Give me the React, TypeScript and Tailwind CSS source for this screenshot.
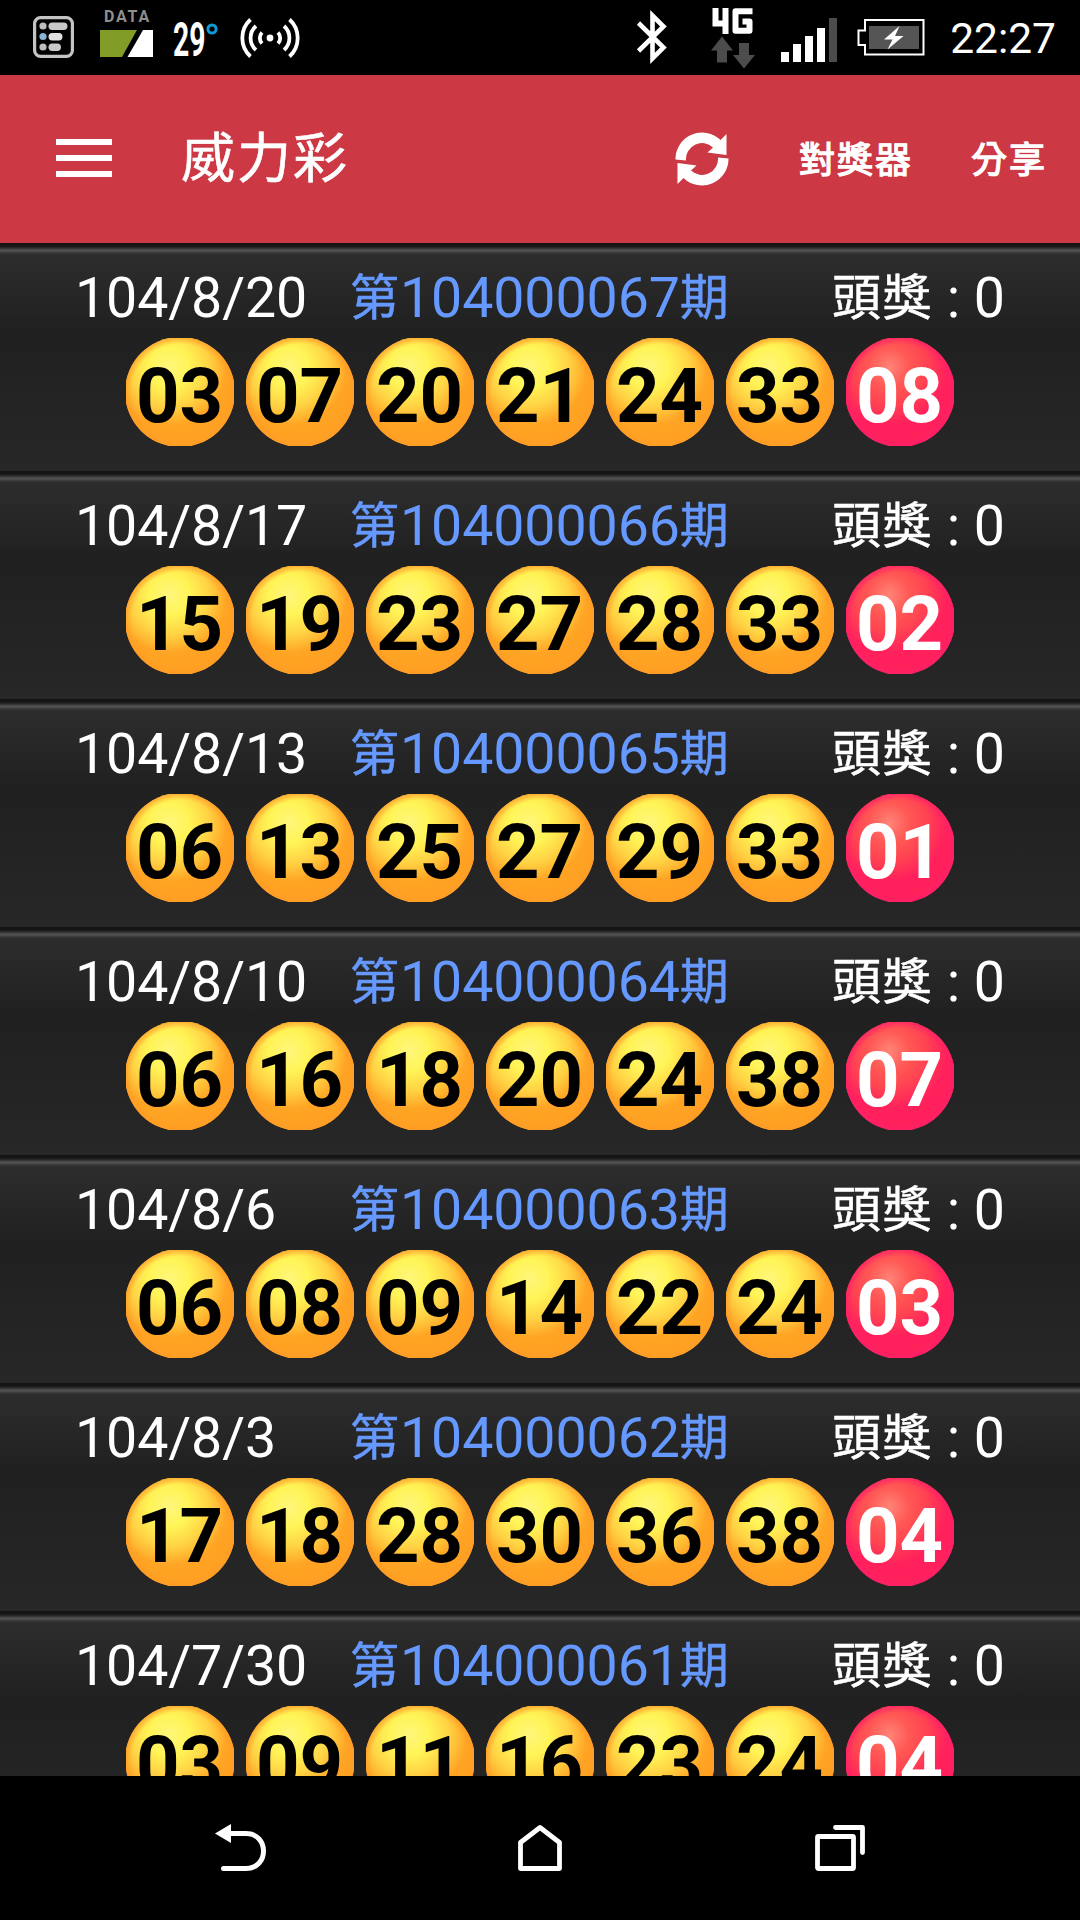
const LATIN = "font-['Roboto','Noto_Sans_CJK_TC',sans-serif]";

type Draw = {
  date: string;
  period: string;
  numbers: string[];
  special: string;
  jackpot: number;
};

const DRAWS: Draw[] = [
  { date: '104/8/20', period: '104000067', numbers: ['03', '07', '20', '21', '24', '33'], special: '08', jackpot: 0 },
  { date: '104/8/17', period: '104000066', numbers: ['15', '19', '23', '27', '28', '33'], special: '02', jackpot: 0 },
  { date: '104/8/13', period: '104000065', numbers: ['06', '13', '25', '27', '29', '33'], special: '01', jackpot: 0 },
  { date: '104/8/10', period: '104000064', numbers: ['06', '16', '18', '20', '24', '38'], special: '07', jackpot: 0 },
  { date: '104/8/6', period: '104000063', numbers: ['06', '08', '09', '14', '22', '24'], special: '03', jackpot: 0 },
  { date: '104/8/3', period: '104000062', numbers: ['17', '18', '28', '30', '36', '38'], special: '04', jackpot: 0 },
  { date: '104/7/30', period: '104000061', numbers: ['03', '09', '11', '16', '23', '24'], special: '04', jackpot: 0 },
];

function ListIcon() {
  return (
    <svg width="41" height="42" viewBox="0 0 41 42" fill="none">
      <rect x="1.6" y="1.6" width="37.8" height="38.8" rx="6" stroke="#c4c4c4" strokeWidth="3.2" />
      <circle cx="10" cy="10" r="3.6" fill="#bdbdbd" />
      <circle cx="10" cy="20.5" r="3.6" fill="#86b4d4" />
      <circle cx="10" cy="31" r="3.6" fill="#bdbdbd" />
      <rect x="15.5" y="6.5" width="19" height="7.4" rx="3.7" fill="#c8c8c8" />
      <rect x="15.5" y="17" width="14" height="7.4" rx="3.7" fill="#e2e2e2" />
      <rect x="15.5" y="27.5" width="12.5" height="7.4" rx="3.7" fill="#c8c8c8" />
    </svg>
  );
}

function HotspotIcon() {
  return (
    <svg width="60" height="40" viewBox="0 0 60 40" fill="none" stroke="#fff" strokeWidth="3.8">
      <circle cx="30" cy="20" r="3.4" fill="#fff" stroke="none" />
      <path d="M22 14.5a8 8 0 0 0 0 11M16 8a16 16 0 0 0 0 24M10.5 1.5a25 25 0 0 0 0 37" />
      <path d="M38 14.5a8 8 0 0 1 0 11M44 8a16 16 0 0 1 0 24M49.5 1.5a25 25 0 0 1 0 37" />
    </svg>
  );
}

function StatusBar() {
  return (
    <header className="flex h-[75px] shrink-0 items-start bg-black text-white">
      <div className="ml-[33px] mt-[16px]">
        <ListIcon />
      </div>
      <div className="ml-[26px] mt-[9px] flex w-[53px] flex-col">
        <span className="pl-1 text-[16px] font-bold leading-[15px] tracking-[1.8px] text-[#8f8f8f]">DATA</span>
        <svg className="mt-[6px]" width="53" height="27" viewBox="0 0 53 27">
          <path d="M0 0H37L22 27H0z" fill="#819c27" />
          <path d="M43 0H53V27H27.5z" fill="#fff" />
        </svg>
      </div>
      <div className="ml-[20px] mt-[17px] flex w-[45px]">
        <span className="w-[33px] origin-left scale-x-[0.59] text-[48px] font-bold leading-[46px]">29</span>
        <svg className="mt-[6px] shrink-0" width="12" height="12" viewBox="0 0 12 12" fill="none">
          <circle cx="6" cy="6" r="4.1" stroke="#0f9ad8" strokeWidth="3" />
        </svg>
      </div>
      <div className="ml-[22px] mt-[18px]">
        <HotspotIcon />
      </div>

      <div className="ml-auto mt-[9px]">
        <svg width="32" height="56" viewBox="0 0 32 56" fill="none" stroke="#fff" strokeWidth="4.6">
          <path d="M2.5 14L27.5 38.5 16.5 49.5V6.5L27.5 17.5 2.5 42" />
        </svg>
      </div>
      <svg className="ml-[42px] mt-[7px]" width="46" height="62" viewBox="0 0 46 62" fill="none">
        <path d="M5.5 1V16.5H15M15.5 1V27" stroke="#fff" strokeWidth="6" />
        <path d="M42.5 4.2H25.5V23.8H39.5V14.5H32.5" stroke="#fff" strokeWidth="6" strokeLinejoin="round" />
        <path d="M12 29.5L23 43.5H17V55.5H7V43.5H1z" fill="#4c4c4c" />
        <path d="M29 36H39V48H45L34 61.5 23 48H29z" fill="#4c4c4c" />
      </svg>
      <div className="ml-[25px] mt-[18px] flex h-[44px] items-end gap-1">
        <i className="h-[10px] w-2 bg-white" />
        <i className="h-[18px] w-2 bg-white" />
        <i className="h-[26px] w-2 bg-white" />
        <i className="h-[34px] w-2 bg-white" />
        <i className="h-[44px] w-2 bg-[#4c4c4c]" />
      </div>
      <svg className="ml-[20px] mt-[19px]" width="68" height="37" viewBox="0 0 68 37" fill="none">
        <path d="M8 1H66.5V35.5H8V26H1.5V11.5H8z" stroke="#fff" strokeWidth="2" />
        <rect x="12" y="7" width="50" height="23" fill="#555" />
        <path d="M42.5 7L27 20.5H35.5L30.5 30.5 46.5 17H38z" fill="#fff" />
      </svg>
      <span className="ml-[25px] mr-[24px] mt-[14px] text-[42.5px] leading-[50px]">22:27</span>
    </header>
  );
}

function SyncIcon() {
  return (
    <svg width="54" height="54" viewBox="0 0 54 54" fill="#fff">
      <path d="M.5 27.5A26.5 26.5 0 0 1 45.5 8L51.5 2V23L32.5 20.5 38 15.5A16 16 0 0 0 11 28.5z" />
      <path d="M53.5 26.5A26.5 26.5 0 0 1 8.5 46L2.5 52V31L21.5 33.5 16 38.5A16 16 0 0 0 43 25.5z" />
    </svg>
  );
}

function Toolbar() {
  return (
    <nav className="flex h-[168px] shrink-0 items-center bg-[#cc3844] pb-[2px] text-white">
      <button className="ml-[56px] flex w-[56px] flex-col gap-[10px]" aria-label="menu">
        <i className="h-[6px] bg-white" />
        <i className="h-[6px] bg-white" />
        <i className="h-[6px] bg-white" />
      </button>
      <h1 className="ml-[69px] pt-[3px] text-[54px] leading-[60px] tracking-[2px] [-webkit-text-stroke:0.6px]">威力彩</h1>
      <button className="ml-auto pt-[2px]" aria-label="refresh">
        <SyncIcon />
      </button>
      <button className="ml-[70px] pt-[6px] text-[36px] leading-[44px] tracking-[2px] [-webkit-text-stroke:1.3px]">
        對獎器
      </button>
      <button className="ml-[58px] mr-[33px] pt-[6px] text-[36px] leading-[44px] tracking-[2px] [-webkit-text-stroke:1.3px]">
        分享
      </button>
    </nav>
  );
}

function Ball({ value, special = false }: { value: string; special?: boolean }) {
  const color = special
    ? 'text-white bg-[radial-gradient(circle,transparent_48px,#ff2068_57px),radial-gradient(circle_at_40%_27%,#ff8478_0%,#ff5854_20%,#ff4452_36%,#ff205c_57%,#ff205c_100%)]'
    : 'text-black bg-[radial-gradient(circle,transparent_48px,#ff9c28_57px),radial-gradient(circle_at_40%_27%,#fff67c_0%,#fff456_20%,#ffd244_39%,#ffa424_57%,#ff9c20_100%)]';
  return (
    <span
      className={`flex size-[108px] items-center justify-center pr-[1px] pt-[7px] text-[76px] font-bold leading-none [clip-path:circle(55px)] ${color}`}
    >
      {value}
    </span>
  );
}

function DrawRow({ draw }: { draw: Draw }) {
  return (
    <li className="flex h-[228px] shrink-0 flex-col bg-[linear-gradient(#141414_0px,#161616_3px,#2e2e2e_5px,#505050_7px,#505050_8px,#363636_10px,#2c2c2c_12px,#2a2a2a_30px,#202020_88px,#232323_150px,#272727_228px)]">
      <div className="flex h-[95px] items-start pt-[23px] text-[55.5px] leading-[66px] tracking-[-0.1px] text-white">
        <span className="ml-[75px] w-[275px]">{draw.date}</span>
        <span className="flex w-[482px] text-[#6699ff]">
          <span className="w-[50px] text-[49px] [-webkit-text-stroke:0.5px]">第</span>
          {draw.period}
          <span className="text-[49px] [-webkit-text-stroke:0.5px]">期</span>
        </span>
        <span className="flex whitespace-pre">
          <span className="text-[49px] tracking-[1.5px] [-webkit-text-stroke:0.5px]">頭獎</span> : {draw.jackpot}
        </span>
      </div>
      <div className="flex justify-center gap-3">
        {draw.numbers.map((n) => (
          <Ball key={n} value={n} />
        ))}
        <Ball value={draw.special} special />
      </div>
    </li>
  );
}

function NavBar() {
  return (
    <footer className="flex h-[144px] shrink-0 items-center justify-between bg-black px-[215px]">
      <svg width="52" height="48" viewBox="0 0 52 48" fill="none">
        <path d="M0 9.5L16 0V19z" fill="#fff" />
        <path
          d="M15 9.5H31C42 9.5 48.5 17.5 48.5 27S42 44.5 31 44.5H8.5"
          stroke="#fff"
          strokeWidth="5"
          strokeLinecap="round"
        />
      </svg>
      <svg width="46" height="48" viewBox="0 0 46 48" fill="none">
        <path d="M2.5 18.5L22 3.5 41.5 18.5V44.5H2.5z" stroke="#fff" strokeWidth="4.8" strokeLinejoin="round" />
      </svg>
      <svg width="50" height="48" viewBox="0 0 50 48" fill="none" stroke="#fff" strokeWidth="4.8">
        <rect x="2.5" y="12.5" width="36" height="32" rx="1" />
        <path d="M20.5 3.5H47.5V28.5" strokeLinecap="round" strokeLinejoin="round" />
      </svg>
    </footer>
  );
}

export default function App() {
  return (
    <div className={`flex h-[1920px] w-[1080px] flex-col overflow-hidden bg-black ${LATIN}`}>
      <StatusBar />
      <Toolbar />
      <ul className="flex min-h-0 flex-1 flex-col overflow-hidden">
        {DRAWS.map((d) => (
          <DrawRow key={d.period} draw={d} />
        ))}
      </ul>
      <NavBar />
    </div>
  );
}
